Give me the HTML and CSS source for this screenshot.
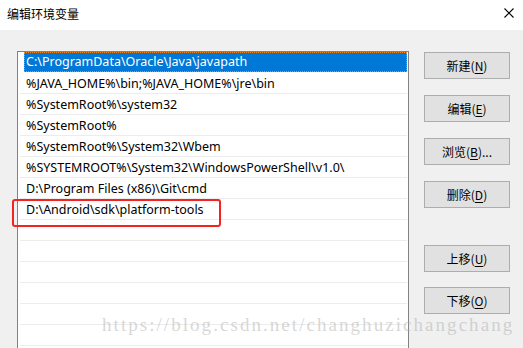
FILE: index.html
```html
<!DOCTYPE html>
<html>
<head>
<meta charset="utf-8">
<link rel="stylesheet" href="styles.css">
</head>
<body>
<div class="window">
  <div class="titlebar">
    <span class="title">编辑环境变量</span>
    <svg class="close" width="10" height="10" viewBox="0 0 10 10"><path d="M0.5 0.5L9.5 9.5M9.5 0.5L0.5 9.5" stroke="#000" stroke-width="1.1" fill="none"/></svg>
  </div>
  <div class="content">
    <div class="listbox">
      <div class="row selected"><span>C:\ProgramData\Oracle\Java\javapath</span></div>
      <div class="row"><span>%JAVA_HOME%\bin;%JAVA_HOME%\jre\bin</span></div>
      <div class="row"><span>%SystemRoot%\system32</span></div>
      <div class="row"><span>%SystemRoot%</span></div>
      <div class="row"><span>%SystemRoot%\System32\Wbem</span></div>
      <div class="row"><span>%SYSTEMROOT%\System32\WindowsPowerShell\v1.0\</span></div>
      <div class="row"><span>D:\Program Files (x86)\Git\cmd</span></div>
      <div class="row"><span>D:\Android\sdk\platform-tools</span></div>
      <div class="row"></div>
      <div class="row"></div>
      <div class="row"></div>
      <div class="row"></div>
      <div class="row"></div>
      <div class="row"></div>
      <div class="highlight"></div>
    </div>
    <div class="buttons">
      <div class="group">
        <button class="btn">新建(<u>N</u>)</button>
        <button class="btn">编辑(<u>E</u>)</button>
        <button class="btn">浏览(<u>B</u>)...</button>
        <button class="btn">删除(<u>D</u>)</button>
      </div>
      <div class="group lower">
        <button class="btn">上移(<u>U</u>)</button>
        <button class="btn">下移(<u>O</u>)</button>
      </div>
    </div>
  </div>
  <div class="watermark">https://blog.csdn.net/changhuzichangchang</div>
</div>
</body>
</html>
```
FILE: styles.css
```css
html, body {
  margin: 0;
  padding: 0;
}
body {
  width: 523px;
  height: 348px;
  overflow: hidden;
  background: #f0f0f0;
  font-family: "Noto Sans", "Noto Sans CJK SC", sans-serif;
  font-size: 12.5px;
  color: #000;
}
.window {
  position: relative;
  width: 523px;
  height: 348px;
  overflow: hidden;
}
.titlebar {
  height: 30px;
  background: #fff;
  display: flex;
  align-items: center;
  justify-content: space-between;
  padding: 0 9px 0 7px;
  box-sizing: border-box;
}
.title {
  font-family: "Noto Sans CJK SC", sans-serif;
  font-size: 12px;
  margin-top: -3px;
}
.close {
  margin-top: -4px;
}
.content {
  display: flex;
  padding: 21px 0 0 17px;
}
.listbox {
  position: relative;
  width: 392px;
  height: 320px;
  box-sizing: border-box;
  border: 1px solid #828282;
  border-bottom: none;
  background: #fff;
  padding: 0 1px 0 1px;
}
.row {
  height: 21px;
  border-bottom: 1px solid #ececec;
  box-sizing: border-box;
  display: flex;
  align-items: center;
  padding-left: 6px;
  padding-top: 2px;
  margin-left: 1px;
  white-space: nowrap;
}
.row span {
  line-height: 1;
}
.row.selected {
  background: #0078d7;
  color: #fff;
  margin-left: 5px;
  padding-left: 1px;
  padding-top: 1px;
  border: 1px dotted #f08a24;
  height: 20px;
  border-bottom: 1px dotted #f08a24;
  margin-bottom: 1px;
}
.highlight {
  position: absolute;
  left: -6px;
  top: 147px;
  width: 205px;
  height: 24px;
  border: 2.5px solid #f4231f;
  border-radius: 3px;
}
.buttons {
  display: flex;
  flex-direction: column;
  margin-left: 15px;
  padding-top: 1px;
}
.group {
  display: flex;
  flex-direction: column;
  gap: 16px;
}
.group.lower {
  margin-top: 37px;
  gap: 15px;
}
.btn {
  width: 86px;
  height: 27px;
  background: #e1e1e1;
  border: 1px solid #adadad;
  font-family: "Noto Sans CJK SC", sans-serif;
  font-size: 12px;
  color: #000;
  padding: 0;
  margin: 0;
}
.btn u {
  text-decoration: underline;
  text-underline-offset: 2px;
}
.watermark {
  position: absolute;
  left: 102px;
  top: 314px;
  font-family: "Liberation Serif", serif;
  font-size: 19px;
  letter-spacing: 2.05px;
  color: rgba(175, 175, 175, 0.5);
  white-space: nowrap;
}
```
